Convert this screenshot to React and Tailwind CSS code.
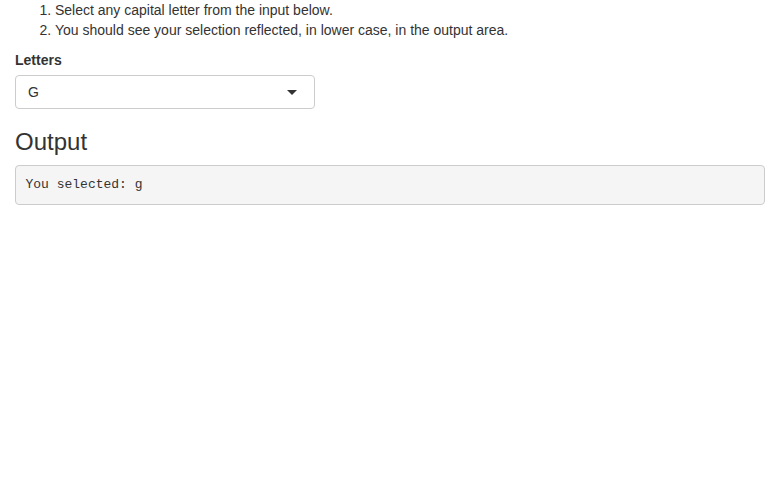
export default function App() {
  return (
    <div className="px-[15px] text-[14px] leading-[20px] text-[#333333]" style={{ fontFamily: '"Liberation Sans", Arial, sans-serif' }}>
      <ol className="list-decimal pl-[40px] mb-[10px] mt-0">
        <li>Select any capital letter from the input below.</li>
        <li>You should see your selection reflected, in lower case, in the output area.</li>
      </ol>
      <div className="mb-[15px]">
        <label className="block font-bold mb-[5px]">Letters</label>
        <div className="relative w-[300px] h-[34px] border border-[#cccccc] rounded-[4px] bg-white px-[12px] flex items-center">
          <span>G</span>
          <span className="absolute right-[17px] top-1/2 mt-[-2px] w-0 h-0 border-[5px] border-solid border-t-[#333333] border-x-transparent border-b-transparent"></span>
        </div>
      </div>
      <h3 className="text-[24px] leading-[1.1] font-medium mt-[20px] mb-[10px]">Output</h3>
      <pre className="bg-[#f5f5f5] border border-[#cccccc] rounded-[4px] p-[9.5px] text-[13px] leading-[1.42857] text-[#333333] m-0" style={{ fontFamily: '"Liberation Mono", "Courier New", monospace' }}>You selected: g</pre>
    </div>
  );
}
